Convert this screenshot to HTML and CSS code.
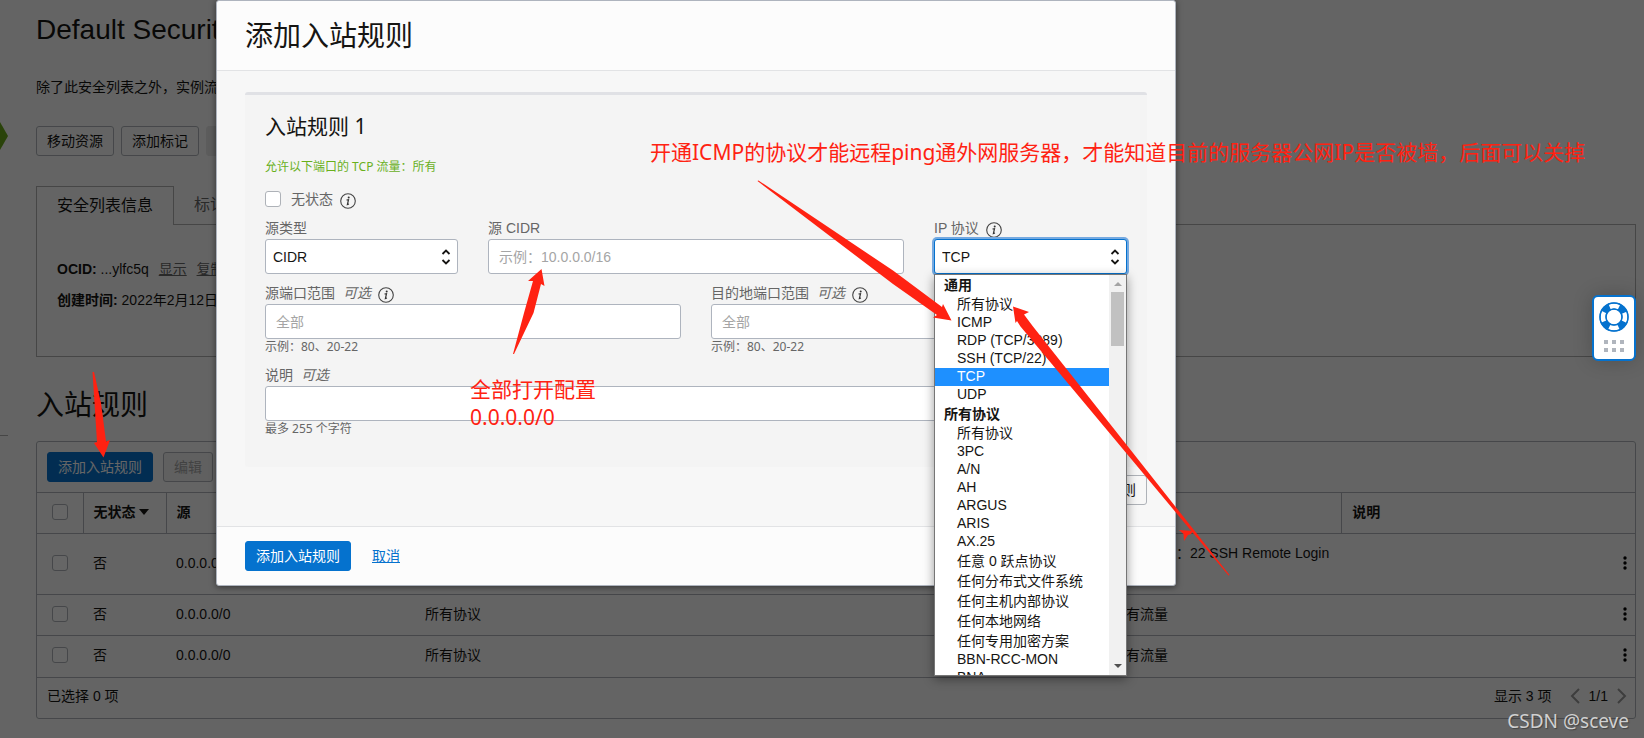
FILE: index.html
```html
<!DOCTYPE html>
<html lang="zh-CN">
<head>
  <meta charset="UTF-8">
  <meta name="viewport" content="width=device-width, initial-scale=1.0">
  <title>添加入站规则</title>
  <link rel="stylesheet" href="styles.css">
</head>
<body>
  <svg class="status-hex" width="8" height="28" viewBox="0 0 8 28"><path d="M0 0L8 14L0 28z" fill="#69a81b"/></svg>
  <div class="side-line"></div>

  <main class="page">
    <h1 class="page-title">Default Security</h1>
    <p class="page-desc">除了此安全列表之外，实例流量</p>
    <div class="actions">
      <button type="button" class="btn">移动资源</button>
      <button type="button" class="btn">添加标记</button>
      <button type="button" class="btn btn-off" disabled>终止</button>
    </div>

    <div class="tabs">
      <button type="button" class="tab tab-active">安全列表信息</button>
      <button type="button" class="tab">标记</button>
    </div>
    <section class="info-box">
      <p><b>OCID:</b> ...ylfc5q <a href="#">显示</a> <a href="#">复制</a></p>
      <p><b>创建时间:</b> 2022年2月12日</p>
    </section>

    <h2 class="section-title">入站规则</h2>
    <section class="rules">
      <div class="toolbar">
        <button type="button" class="btn btn-primary">添加入站规则</button>
        <button type="button" class="btn btn-disabled" disabled>编辑</button>
      </div>
      <table class="rules-table">
        <colgroup>
          <col class="c-check"><col class="c-state"><col class="c-source"><col class="c-proto"><col class="c-allow"><col><col class="c-menu">
        </colgroup>
        <thead>
          <tr>
            <th><input type="checkbox" class="check" aria-label="全选"></th>
            <th>无状态 <svg width="10" height="6" viewBox="0 0 10 6"><path d="M0 0h10L5 6z" fill="#161513"/></svg></th>
            <th>源</th>
            <th></th>
            <th></th>
            <th>说明</th>
            <th></th>
          </tr>
        </thead>
        <tbody>
          <tr class="tall">
            <td><input type="checkbox" class="check" aria-label="选择"></td>
            <td>否</td>
            <td>0.0.0.0/0</td>
            <td></td>
            <td class="top">TCP&nbsp; 流量：22 SSH Remote Login</td>
            <td></td>
            <td><svg class="kebab" width="4" height="14" viewBox="0 0 4 14"><circle cx="2" cy="2" r="1.7"/><circle cx="2" cy="7" r="1.7"/><circle cx="2" cy="12" r="1.7"/></svg></td>
          </tr>
          <tr>
            <td><input type="checkbox" class="check" aria-label="选择"></td>
            <td>否</td>
            <td>0.0.0.0/0</td>
            <td>所有协议</td>
            <td>所有流量</td>
            <td></td>
            <td><svg class="kebab" width="4" height="14" viewBox="0 0 4 14"><circle cx="2" cy="2" r="1.7"/><circle cx="2" cy="7" r="1.7"/><circle cx="2" cy="12" r="1.7"/></svg></td>
          </tr>
          <tr>
            <td><input type="checkbox" class="check" aria-label="选择"></td>
            <td>否</td>
            <td>0.0.0.0/0</td>
            <td>所有协议</td>
            <td>所有流量</td>
            <td></td>
            <td><svg class="kebab" width="4" height="14" viewBox="0 0 4 14"><circle cx="2" cy="2" r="1.7"/><circle cx="2" cy="7" r="1.7"/><circle cx="2" cy="12" r="1.7"/></svg></td>
          </tr>
        </tbody>
      </table>
      <div class="table-foot">
        <span>已选择 0 项</span>
        <div class="pager">
          <span class="count">显示 3 项</span>
          <svg width="10" height="16" viewBox="0 0 10 16"><path d="M9 1L2 8l7 7"/></svg>
          <span>1/1</span>
          <svg width="10" height="16" viewBox="0 0 10 16"><path d="M1 1l7 7l-7 7"/></svg>
        </div>
      </div>
    </section>
  </main>

  <div class="backdrop"></div>

  <div class="modal" role="dialog" aria-labelledby="modal-title">
    <header class="modal-head">
      <h2 id="modal-title">添加入站规则</h2>
    </header>
    <div class="modal-body">
      <form class="rule-card" id="rule-form">
        <h3>入站规则 1</h3>
        <p class="allow">允许以下端口的 TCP 流量：所有</p>
        <div class="stateless">
          <input type="checkbox" class="check" id="stateless">
          <label for="stateless">无状态</label>
          <svg class="info" width="16" height="16" viewBox="0 0 16 16"><use href="#i-info"/></svg>
        </div>
        <div class="row row-three">
          <div class="field">
            <div class="label"><label for="source-type">源类型</label></div>
            <div class="select">
              <select id="source-type"><option>CIDR</option></select>
              <svg width="10" height="16" viewBox="0 0 10 16"><use href="#i-sort"/></svg>
            </div>
          </div>
          <div class="field">
            <div class="label"><label for="cidr">源 CIDR</label></div>
            <input type="text" id="cidr" placeholder="示例：10.0.0.0/16">
          </div>
          <div class="field">
            <div class="label"><label for="protocol">IP 协议</label><svg class="info" width="16" height="16" viewBox="0 0 16 16"><use href="#i-info"/></svg></div>
            <div class="select select-open">
              <select id="protocol"><option>TCP</option></select>
              <svg width="10" height="16" viewBox="0 0 10 16"><use href="#i-sort"/></svg>
              <div class="menu">
                <ul role="listbox" aria-label="IP 协议">
                  <li class="cjk group">通用</li>
                  <li class="cjk">所有协议</li>
                  <li>ICMP</li>
                  <li>RDP (TCP/3389)</li>
                  <li>SSH (TCP/22)</li>
                  <li class="selected">TCP</li>
                  <li>UDP</li>
                  <li class="cjk group">所有协议</li>
                  <li class="cjk">所有协议</li>
                  <li>3PC</li>
                  <li>A/N</li>
                  <li>AH</li>
                  <li>ARGUS</li>
                  <li>ARIS</li>
                  <li>AX.25</li>
                  <li class="cjk">任意 0 跃点协议</li>
                  <li class="cjk">任何分布式文件系统</li>
                  <li class="cjk">任何主机内部协议</li>
                  <li class="cjk">任何本地网络</li>
                  <li class="cjk">任何专用加密方案</li>
                  <li>BBN-RCC-MON</li>
                  <li>BNA</li>
                </ul>
                <div class="scrollbar">
                  <svg width="8" height="4" viewBox="0 0 8 4"><path d="M0 4h8L4 0z" fill="#a3a3a3"/></svg>
                  <div class="thumb"></div>
                  <svg width="8" height="4" viewBox="0 0 8 4"><path d="M0 0h8L4 4z" fill="#505050"/></svg>
                </div>
              </div>
            </div>
          </div>
        </div>
        <div class="row row-two">
          <div class="field">
            <div class="label"><label for="src-port">源端口范围 <i>可选</i></label><svg class="info" width="16" height="16" viewBox="0 0 16 16"><use href="#i-info"/></svg></div>
            <input type="text" id="src-port" placeholder="全部">
            <span class="hint">示例：80、20-22</span>
          </div>
          <div class="field">
            <div class="label"><label for="dst-port">目的地端口范围 <i>可选</i></label><svg class="info" width="16" height="16" viewBox="0 0 16 16"><use href="#i-info"/></svg></div>
            <input type="text" id="dst-port" placeholder="全部">
            <span class="hint">示例：80、20-22</span>
          </div>
        </div>
        <div class="row">
          <div class="field">
            <div class="label"><label for="desc">说明 <i>可选</i></label></div>
            <input type="text" id="desc">
            <span class="hint">最多 255 个字符</span>
          </div>
        </div>
      </form>
      <button type="button" class="btn another">+ 另一个入站规则</button>
    </div>
    <footer class="modal-foot">
      <button type="submit" form="rule-form" class="btn btn-primary">添加入站规则</button>
      <a href="#">取消</a>
    </footer>
  </div>

  <button type="button" class="help" aria-label="帮助">
    <svg width="30" height="30" viewBox="0 0 30 30" fill="none" stroke="#0572ce">
      <circle cx="15" cy="15" r="11" stroke-width="7"/>
      <circle cx="15" cy="15" r="11" stroke="#fff" stroke-width="5" stroke-dasharray="9.5 7.78" stroke-dashoffset="4.75"/>
      <circle cx="15" cy="15" r="14" stroke-width="1.5"/>
      <circle cx="15" cy="15" r="8" stroke-width="1.5"/>
    </svg>
    <svg width="20" height="12" viewBox="0 0 20 12" fill="#b0b5bd"><path d="M0 0h4v4H0zM8 0h4v4H8zM16 0h4v4h-4zM0 8h4v4H0zM8 8h4v4H8zM16 8h4v4h-4z"/></svg>
  </button>

  <p class="note note-icmp">开通ICMP的协议才能远程ping通外网服务器，才能知道目前的服务器公网IP是否被墙，后面可以关掉</p>
  <p class="note note-cidr">全部打开配置<br>0.0.0.0/0</p>
  <svg class="arrows" width="1644" height="738" viewBox="0 0 1644 738" fill="#ff2212">
    <path d="M92.500 372L94 372L101 403L106 441.500L110 440L103.500 457.500L94 443L97 442z"/>
    <path d="M513 354L524 313L533 281L528 281L541.500 269L544.500 286L541 284L533.500 313L514 354z"/>
    <path d="M757.500 181L758.500 180.500L893 270.500L942 307L943 304L951.500 320.500L933 317.500L937 315L893 284z"/>
    <path d="M1013 306.500L1029 312L1024 314.500L1033 326.500L1229.500 575L1228.500 575.500L1020.500 326.500L1017 321L1015.500 323z"/>
    <path d="M1179 530L1193 531L1191 534L1188 535L1184 541L1183.500 534z"/>
  </svg>
  <span class="watermark">CSDN @sceve</span>

  <svg class="defs" width="0" height="0">
    <symbol id="i-info" viewBox="0 0 16 16">
      <circle cx="8" cy="8" r="7.300" fill="none" stroke="#444" stroke-width="1.100"/>
      <circle cx="8.700" cy="4.500" r="1" fill="#333"/>
      <path d="M6.500 7L8.500 6.700L7.400 11.500L9 11" fill="none" stroke="#333" stroke-width="1.200"/>
    </symbol>
    <symbol id="i-sort" viewBox="0 0 10 16">
      <path d="M1.500 5L5 1.500L8.500 5M1.500 11L5 14.500L8.500 11" fill="none" stroke="#161513" stroke-width="1.800"/>
    </symbol>
  </svg>
</body>
</html>
```
FILE: styles.css
```css
* {
  box-sizing: border-box;
}
body {
  position: relative;
  margin: 0;
  min-height: 100vh;
  overflow: hidden;
  background: #fbfbfb;
  color: #161513;
  font: 14px/20px "Liberation Sans", "Noto Sans CJK SC", sans-serif;
}
h1, h2, h3, p, ul {
  margin: 0;
  padding: 0;
  font-weight: 400;
}
button, input, select {
  font: inherit;
  color: inherit;
}
.btn {
  height: 30px;
  padding: 0 10px;
  border: 1px solid #aeb2b8;
  border-radius: 3px;
  background: transparent;
  white-space: nowrap;
}
.btn-primary {
  border-color: #0572ce;
  background: #0572ce;
  color: #fff;
}
.btn-off {
  border-color: #e6e6e6;
  background: #e6e6e6;
  color: #999;
}
.btn-disabled {
  background: #f0f0f0;
  color: #a5a5a5;
}
.check {
  appearance: none;
  display: block;
  width: 16px;
  height: 16px;
  margin: 0;
  border: 1px solid #aeb2b8;
  border-radius: 3px;
  background: #fff;
}

/* page behind the dialog */
.page {
  padding: 10px 8px 21px 36px;
}
.page-title, .section-title {
  font-size: 28px;
  line-height: 40px;
}
.page-desc {
  margin-top: 27px;
}
.actions {
  display: flex;
  gap: 7px;
  margin-top: 29px;
}
.tabs {
  display: flex;
  margin-top: 30px;
}
.tab {
  height: 38px;
  padding: 0 20px;
  border: 0;
  background: transparent;
  color: #666;
  font-size: 16px;
}
.tab-active {
  position: relative;
  height: 39px;
  margin-bottom: -1px;
  border: 1px solid #aeaeae;
  border-bottom: 0;
  background: #fbfbfb;
  color: #161513;
}
.info-box {
  display: flex;
  flex-direction: column;
  gap: 11px;
  height: 133px;
  padding: 34px 20px;
  border: 1px solid #aeaeae;
}
.info-box a {
  margin-left: 6px;
  color: #666;
}
.section-title {
  margin: 29px 0 15px;
}
.rules {
  border: 1px solid #aeb2b8;
  border-radius: 3px;
}
.toolbar {
  display: flex;
  gap: 10px;
  padding: 10px;
}
.rules-table {
  width: 100%;
  table-layout: fixed;
  border-collapse: collapse;
}
.c-check {
  width: 46px;
}
.c-state {
  width: 83px;
}
.c-source {
  width: 249px;
}
.c-proto {
  width: 43%;
}
.c-allow {
  width: 15%;
}
.c-menu {
  width: 22px;
}
.rules-table tr {
  height: 41px;
  border-top: 1px solid #aeb2b8;
}
.rules-table .tall {
  height: 61px;
}
.rules-table th, .rules-table td {
  padding: 0 10px 2px;
  text-align: left;
  white-space: nowrap;
}
.rules-table th:nth-child(2), .rules-table th:nth-child(3), .rules-table th:nth-child(6) {
  border-left: 1px solid #aeb2b8;
}
.rules-table th svg {
  margin-bottom: 2px;
}
.rules-table .check {
  margin-left: 5px;
}
.rules-table .top {
  padding-top: 9px;
  vertical-align: top;
}
.kebab {
  display: block;
}
.table-foot {
  display: flex;
  justify-content: space-between;
  align-items: center;
  height: 41px;
  padding: 0 8px 3px 10px;
  border-top: 1px solid #aeb2b8;
}
.pager {
  display: flex;
  align-items: center;
  gap: 9px;
}
.pager .count {
  margin-right: 9px;
}
.pager svg {
  fill: none;
  stroke: #999;
  stroke-width: 2;
}
.status-hex {
  position: absolute;
  top: 122px;
  left: 0;
}
.side-line {
  position: absolute;
  top: 435px;
  left: 0;
  width: 8px;
  border-top: 1px solid #aeaeae;
}
.backdrop {
  position: absolute;
  inset: 0;
  background: rgba(0, 0, 0, 0.6);
}

/* dialog */
.modal {
  position: absolute;
  top: 0;
  left: 216px;
  width: 960px;
  border: 1px solid #aeb4be;
  border-radius: 3px;
  background: #fcfcfc;
  box-shadow: 0 1px 6px rgba(0, 0, 0, 0.5);
}
.modal-head {
  padding: 16px 28px 13px;
  border-bottom: 1px solid #e2e3e5;
}
.modal-head h2 {
  font-size: 28px;
  line-height: 40px;
}
.modal-body {
  display: flex;
  flex-direction: column;
  padding: 21px 28px;
  background: #f7f7f7;
}
.rule-card {
  padding: 18px 20px 30px;
  border-top: 3px solid #e0e1e5;
  border-radius: 3px;
  background: #f4f4f4;
}
.rule-card h3 {
  font: 21px/26px "Noto Sans", "Noto Sans CJK SC", sans-serif;
}
.allow {
  margin-top: 18px;
  color: #69b01c;
  font: 12px/20px "Noto Sans", "Noto Sans CJK SC", sans-serif;
}
.stateless {
  display: flex;
  align-items: center;
  margin: 12px 0 9px;
  color: #666;
}
.stateless label {
  margin-left: 10px;
}
.info {
  flex: none;
  margin: 3px 0 0 7px;
}
.row {
  display: grid;
}
.row-three {
  grid-template-columns: 193px 1fr 193px;
  gap: 30px;
}
.row-two {
  grid-template-columns: 1fr 1fr;
  gap: 30px;
  margin: 9px 0 10px;
}
.label {
  display: flex;
  align-items: center;
  height: 21px;
  padding-bottom: 1px;
  color: #666;
  white-space: nowrap;
}
.label i {
  margin-left: 4px;
}
.field input, .select select {
  display: block;
  width: 100%;
  height: 35px;
  padding: 0 10px;
  border: 1px solid #aeb4be;
  border-radius: 3px;
  background: #fff;
}
.field input::placeholder {
  color: #a5a5a5;
}
.select {
  position: relative;
}
.select select {
  appearance: none;
  padding: 0 7px;
}
.select > svg {
  position: absolute;
  top: 10px;
  right: 7px;
}
.select-open select {
  border-color: #0572ce;
  box-shadow: 0 0 0 2px #75a9e0;
}
.hint {
  display: block;
  height: 16px;
  color: #666;
  font: 12px/16px "Noto Sans", "Noto Sans CJK SC", sans-serif;
}
.menu {
  position: absolute;
  z-index: 1;
  top: 35px;
  left: 0;
  display: flex;
  width: 100%;
  height: 402px;
  overflow: hidden;
  border: 1px solid #767676;
  background: #fff;
  box-shadow: 0 3px 10px rgba(0, 0, 0, 0.4);
}
.menu ul {
  flex: 1;
  list-style: none;
}
.menu li {
  height: 18px;
  padding-left: 22px;
  line-height: 17px;
  white-space: nowrap;
}
.menu .cjk {
  height: 20px;
  line-height: 20px;
}
.menu .group {
  height: 19px;
  padding-left: 9px;
  font-weight: 700;
}
.menu .selected {
  background: #1e90ff;
  color: #fff;
}
.scrollbar {
  display: flex;
  flex-direction: column;
  align-items: center;
  width: 17px;
  padding: 7px 0;
  background: #f1f1f1;
}
.thumb {
  width: 13px;
  height: 54px;
  margin: 6px 0 auto;
  background: #c1c1c1;
}
.another {
  align-self: flex-end;
  margin-top: 8px;
}
.modal-foot {
  display: flex;
  align-items: center;
  gap: 21px;
  padding: 14px 28px;
  border-top: 1px solid #e2e3e5;
}
.modal-foot a {
  color: #0572ce;
}

/* floating help */
.help {
  position: absolute;
  top: 295px;
  right: 8px;
  display: flex;
  flex-direction: column;
  align-items: center;
  gap: 8px;
  width: 44px;
  height: 66px;
  padding: 5px 0 0;
  border: 2px solid #0572ce;
  border-radius: 6px;
  background: #fff;
  box-shadow: 0 0 20px rgba(0, 0, 0, 0.2);
}

/* notes */
.note {
  position: absolute;
  z-index: 2;
  color: #ff2212;
  font: 21px/28px "Noto Sans", "Noto Sans CJK SC", sans-serif;
  white-space: nowrap;
}
.note-icmp {
  top: 138px;
  left: 650px;
}
.note-cidr {
  top: 375px;
  left: 470px;
}
.arrows {
  position: absolute;
  z-index: 2;
  top: 0;
  left: 0;
  pointer-events: none;
}
.watermark {
  position: absolute;
  right: 15px;
  bottom: 6px;
  color: #d0d0d0;
  font: 19px/26px "Noto Sans", sans-serif;
  text-shadow: 1px 1px 1px #444;
}
.defs {
  position: absolute;
}
```
